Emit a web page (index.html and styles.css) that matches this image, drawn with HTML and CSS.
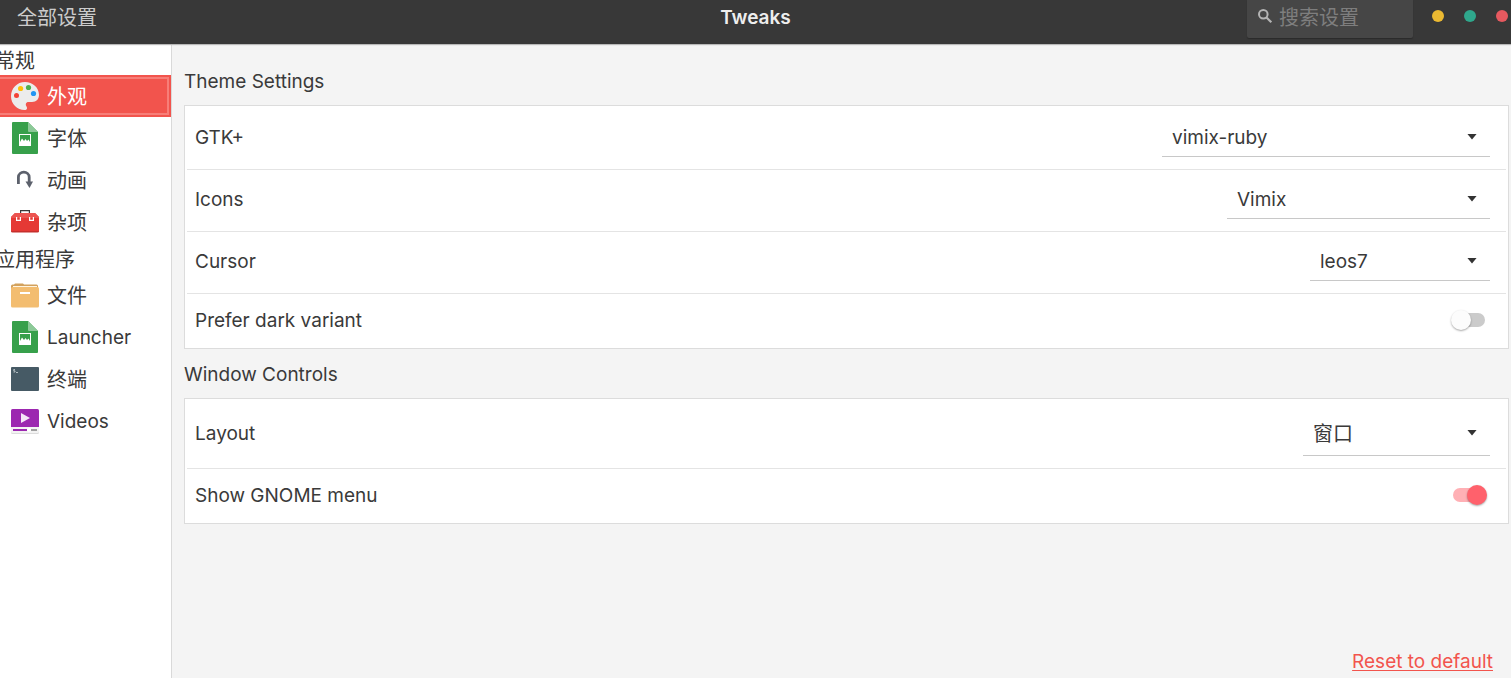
FILE: index.html
```html
<!DOCTYPE html>
<html lang="zh-CN">
<head>
<meta charset="utf-8">
<meta name="viewport" content="width=device-width, initial-scale=1">
<title>Tweaks</title>
<link rel="stylesheet" href="styles.css">
</head>
<body>
<header class="titlebar">
  <span class="titlebar-section">全部设置</span>
  <h1 class="titlebar-title">Tweaks</h1>
  <div class="titlebar-tools">
    <label class="search">
      <svg class="search-icon" viewBox="0 0 16 16" aria-hidden="true"><circle cx="6.300" cy="6.300" r="4.300" fill="none" stroke="#b4b4b4" stroke-width="2"/><path d="M9.500 9.500L14.300 14.300" stroke="#b4b4b4" stroke-width="2.200"/></svg>
      <input class="search-input" type="search" placeholder="搜索设置" aria-label="搜索设置">
    </label>
    <div class="window-buttons">
      <button class="dot dot-min" type="button" aria-label="Minimize"></button>
      <button class="dot dot-max" type="button" aria-label="Maximize"></button>
      <button class="dot dot-close" type="button" aria-label="Close"></button>
    </div>
  </div>
</header>
<div class="body">
  <nav class="sidebar">
    <h2 class="group-title">常规</h2>
    <ul class="nav-list">
      <li><a class="nav-item nav-item-active" href="#appearance" aria-current="page">
        <svg class="nav-icon" viewBox="0 0 32 32" aria-hidden="true"><path d="M16 2C8 2 2 8.300 2 16.300C2 24 8.200 30 15.700 30C18.200 30 18.600 28 17.400 26.200C16 24 17.300 22 19.600 22H23C27.500 22 30 19 30 14.800C30 7.500 23.700 2 16 2Z" fill="#ececec"/><circle cx="7.500" cy="15.500" r="2.500" fill="#f44336"/><circle cx="11.600" cy="8.500" r="2.600" fill="#ffc107"/><circle cx="19.500" cy="7.500" r="2.600" fill="#4caf50"/><circle cx="24.500" cy="13.500" r="2.600" fill="#2196f3"/></svg>
        <span class="nav-label">外观</span></a></li>
      <li><a class="nav-item" href="#fonts">
        <svg class="nav-icon" viewBox="0 0 32 32" aria-hidden="true"><path d="M4 0H19L29 10V31Q29 32 28 32H4Q3 32 3 31V1Q3 0 4 0Z" fill="#37a04b"/><path d="M19 0L29 10H20Q19 10 19 9Z" fill="#8cc998"/><path d="M10 12H22V24H10Z" fill="#fff"/><path d="M11 13H21V20L19.500 17.500L18 19L16.500 17L15 19L13 16.500L11 20Z" fill="#37a04b"/></svg>
        <span class="nav-label">字体</span></a></li>
      <li><a class="nav-item" href="#animation">
        <svg class="nav-icon" viewBox="0 0 32 32" aria-hidden="true"><path d="M9.400 20V13.300C9.400 6.500 20.200 6.500 20.200 13.300V19" fill="none" stroke="#5c616c" stroke-width="2.800"/><path d="M16.500 17.500H24L20.500 24Z" fill="#5c616c"/></svg>
        <span class="nav-label">动画</span></a></li>
      <li><a class="nav-item" href="#misc">
        <svg class="nav-icon" viewBox="0 0 32 32" aria-hidden="true"><path d="M11.600 7V4.600H20.400V7" fill="none" stroke="#3a3a3a" stroke-width="1.200"/><path d="M6 7H26L30 11V24.500Q30 26 28.500 26H3.500Q2 26 2 24.500V11Z" fill="#e53935"/><path d="M6 7H26L30 11V12H2V11Z" fill="#ec5551"/><path d="M2 25Q2 26.500 3.500 26.500H28.500Q30 26.500 30 25Z" fill="#c62f2c"/><path d="M7.600 11V14.400H11.400V11M20.600 11V14.400H24.400V11" fill="none" stroke="#fff" stroke-width="1.200"/></svg>
        <span class="nav-label">杂项</span></a></li>
    </ul>
    <h2 class="group-title">应用程序</h2>
    <ul class="nav-list">
      <li><a class="nav-item" href="#files">
        <svg class="nav-icon" viewBox="0 0 32 32" aria-hidden="true"><path d="M2 7Q2 5.500 3.500 5.500H5L6 4.500H14L15 5.500H27.500Q29 5.500 29 7V12H2Z" fill="#d3a15c"/><path d="M4 7H28V10H4Z" fill="#fff4df"/><path d="M2 9.500Q2 8 3.500 8H28.500Q30 8 30 9.500V27Q30 28.500 28.500 28.500H3.500Q2 28.500 2 27Z" fill="#f3bd70"/><path d="M11 13H21V15H11Z" fill="#fff"/></svg>
        <span class="nav-label">文件</span></a></li>
      <li><a class="nav-item" href="#launcher">
        <svg class="nav-icon" viewBox="0 0 32 32" aria-hidden="true"><path d="M4 0H19L29 10V31Q29 32 28 32H4Q3 32 3 31V1Q3 0 4 0Z" fill="#37a04b"/><path d="M19 0L29 10H20Q19 10 19 9Z" fill="#8cc998"/><path d="M10 12H22V24H10Z" fill="#fff"/><path d="M11 13H21V20L19.500 17.500L18 19L16.500 17L15 19L13 16.500L11 20Z" fill="#37a04b"/></svg>
        <span class="nav-label nav-label-latin">Launcher</span></a></li>
      <li><a class="nav-item" href="#terminal">
        <svg class="nav-icon" viewBox="0 0 32 32" aria-hidden="true"><rect x="2" y="4" width="28" height="24" rx="1" fill="#465a65"/><path d="M6 6.500H4.700V7.800H6V9H4.500M7 9.500H9" fill="none" stroke="#c8d0d4" stroke-width=".8"/></svg>
        <span class="nav-label">终端</span></a></li>
      <li><a class="nav-item" href="#videos">
        <svg class="nav-icon" viewBox="0 0 32 32" aria-hidden="true"><rect x="2" y="5" width="28" height="24" rx="1.500" fill="#dcdcdc"/><rect x="2" y="4" width="28" height="24" rx="1.500" fill="#f3f3f3"/><path d="M3.500 4H28.500Q30 4 30 5.500V22H2V5.500Q2 4 3.500 4Z" fill="#9c27b0"/><path d="M12 8L21 13L12 18Z" fill="#f5e6f8"/><path d="M4 24H18V26H4Z" fill="#9c27b0"/><path d="M22 24H28V26H22Z" fill="#9e9e9e"/><circle cx="20" cy="25" r="2" fill="#fff"/></svg>
        <span class="nav-label nav-label-latin">Videos</span></a></li>
    </ul>
  </nav>
  <main class="content">
    <section class="settings">
      <h2 class="settings-title">Theme Settings</h2>
      <div class="card">
        <div class="row">
          <label for="gtk">GTK+</label>
          <span class="picker picker-xl"><select id="gtk"><option>vimix-ruby</option></select></span>
        </div>
        <div class="row">
          <label for="icons">Icons</label>
          <span class="picker picker-lg"><select id="icons"><option>Vimix</option></select></span>
        </div>
        <div class="row">
          <label for="cursor">Cursor</label>
          <span class="picker picker-sm"><select id="cursor"><option>leos7</option></select></span>
        </div>
        <div class="row row-switch">
          <label for="dark">Prefer dark variant</label>
          <input class="switch" type="checkbox" role="switch" id="dark">
        </div>
      </div>
    </section>
    <section class="settings">
      <h2 class="settings-title">Window Controls</h2>
      <div class="card">
        <div class="row">
          <label for="layout">Layout</label>
          <span class="picker picker-md"><select class="select-tall" id="layout"><option>窗口</option></select></span>
        </div>
        <div class="row row-switch">
          <label for="menu">Show GNOME menu</label>
          <input class="switch" type="checkbox" role="switch" id="menu" checked>
        </div>
      </div>
    </section>
    <a class="reset" href="#reset">Reset to default</a>
  </main>
</div>
</body>
</html>
```
FILE: styles.css
```css
* { box-sizing: border-box; }

body {
  margin: 0;
  min-height: 100vh;
  display: flex;
  flex-direction: column;
  font: 19px/24px Inter, "Noto Sans CJK SC", sans-serif;
  color: #3a3a3a;
  background: #f4f4f4;
}

h1, h2 { margin: 0; font: inherit; }
button, input, select { font: inherit; color: inherit; }

.titlebar {
  display: grid;
  grid-template-columns: minmax(0, 1fr) auto minmax(0, 1fr);
  height: 44px;
  background: #383838;
  box-shadow: 0 1px 1px #b8b8b8;
  position: relative;
}

.titlebar-section { padding: 6px 17px; font-size: 20px; color: #ccc; }
.titlebar-title { padding: 6px 0; font-weight: 600; color: #eee; }

.titlebar-tools {
  display: flex;
  justify-content: flex-end;
  align-items: flex-start;
  gap: 19px;
  padding-right: 3px;
}

.search {
  display: flex;
  width: 166px;
  height: 38px;
  padding: 0 10px;
  gap: 6px;
  border-radius: 0 0 2px 2px;
  background: #464646;
  box-shadow: 0 1px 1px #2b2b2b;
}

.search-icon { flex: none; width: 16px; height: 16px; margin-top: 8px; }

.search-input {
  min-width: 0;
  width: 100%;
  height: 24px;
  margin-top: 6px;
  padding: 0;
  border: 0;
  outline: 0;
  background: none;
  font-size: 20px;
  color: #ddd;
  appearance: none;
}

.search-input::placeholder { color: #7e7e7e; }

.window-buttons { display: flex; gap: 20px; padding-top: 10px; }
.dot { width: 12px; height: 12px; padding: 0; border: 0; border-radius: 50%; }
.dot-min { background: #ebb932; }
.dot-max { background: #2fa78c; }
.dot-close { background: #e6595f; }

.body { flex: 1; display: flex; }

.sidebar {
  flex: none;
  width: 172px;
  overflow: hidden;
  border-right: 1px solid #d9d9d9;
  background: #fff;
  font-size: 20px;
}

.group-title {
  height: 31px;
  margin-left: -5px;
  padding-top: 5px;
}

.nav-list { margin: 0; padding: 0; list-style: none; }

.nav-item {
  display: flex;
  align-items: center;
  gap: 6px;
  height: 42px;
  padding-left: 9px;
  color: inherit;
  text-decoration: none;
}

.nav-item-active {
  margin-left: -4px;
  padding-left: 13px;
  color: #fff;
  background: #f2544d;
  outline: 2px solid #f77e78;
  outline-offset: -4px;
  border-radius: 3px 0 0 3px;
}

.nav-icon { flex: none; width: 32px; height: 32px; }
.nav-label { padding-top: 2px; }
.nav-label-latin { font-size: 19px; }

.content {
  flex: 1;
  min-width: 0;
  display: flex;
  flex-direction: column;
  padding: 24px 2px 4px 12px;
}

.settings { margin-bottom: 12px; }
.settings-title { height: 37px; line-height: 28px; }

.card {
  padding: 2px;
  border: 1px solid #dcdcdc;
  background: #fff;
}

.row {
  display: flex;
  align-items: center;
  justify-content: space-between;
  padding: 12px 16px 12px 8px;
  border-bottom: 1px solid #e4e4e4;
}

.row label { padding-bottom: 2px; }
.row-switch { height: 52px; padding-right: 19px; border-bottom: 0; }
.row-switch label { padding: 2px 0 0; }

.picker { position: relative; display: flex; }

.picker::after {
  content: "";
  position: absolute;
  right: 13px;
  top: 50%;
  width: 10px;
  height: 6px;
  margin-top: -5px;
  background: #333;
  clip-path: polygon(0 0, 100% 0, 50% 100%);
  pointer-events: none;
}

.picker select {
  width: 100%;
  height: 37px;
  padding: 0 32px 0 10px;
  border: 0;
  border-bottom: 1px solid #c8c8c8;
  border-radius: 0;
  background: none;
  appearance: none;
}

.picker .select-tall { height: 43px; font-size: 20px; }
.picker-sm { width: 180px; }
.picker-md { width: 187px; }
.picker-lg { width: 263px; }
.picker-xl { width: 328px; }

.switch {
  position: relative;
  flex: none;
  width: 36px;
  height: 20px;
  margin: 0;
  appearance: none;
}

.switch::before {
  content: "";
  position: absolute;
  inset: 3px 2px;
  border-radius: 7px;
  background: #cbcbcb;
}

.switch::after {
  content: "";
  position: absolute;
  left: 0;
  top: 0;
  width: 20px;
  height: 20px;
  border-radius: 50%;
  background: #fcfcfc;
  box-shadow: 0 1px 2px rgba(0, 0, 0, .35);
}

.switch:checked::before { background: #ffb0b5; }
.switch:checked::after { left: auto; right: 0; background: #ff616c; }

.reset {
  align-self: flex-end;
  margin-top: auto;
  margin-right: 16px;
  color: #f2544d;
  text-underline-offset: 2px;
  text-decoration-thickness: 1px;
}
```
